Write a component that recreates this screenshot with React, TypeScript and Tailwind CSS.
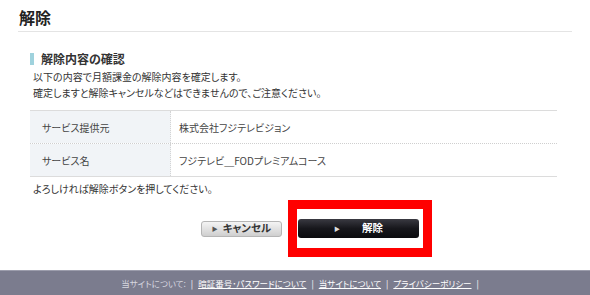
import React from "react";

const jp = "font-['Noto_Sans_CJK_JP','Noto_Sans',sans-serif] [font-feature-settings:'palt']";

export default function App() {
  return (
    <div className={`w-[590px] h-[295px] bg-white flex flex-col text-[#333] ${jp}`}>
      <div className="flex-1 px-[18px]">
        <div className="pt-[6px] pl-[1px] h-[32px] text-[16px] font-bold leading-[22px] text-[#222] border-b border-[#e4e4e4]">
          解除
        </div>
        <div className="pl-[12px] pr-[15px]">
          <div className="mt-[21px] flex items-center h-[12px]">
            <div className="w-[4px] h-[12px] bg-[#9fd2dd]" />
            <div className="ml-[7px] text-[12px] font-bold leading-[12px] text-[#333]">解除内容の確認</div>
          </div>
          <div className="mt-[4px] pl-[3px] text-[10px] leading-[16px] text-[#333]">
            <div>以下の内容で月額課金の解除内容を確定します。</div>
            <div>確定しますと解除キャンセルなどはできませんので、ご注意ください。</div>
          </div>
          <div className="mt-[9px] border-t border-b border-[#dcdcdc] text-[10px] text-[#444]">
            <div className="flex h-[33px] border-b border-dotted border-[#cfcfcf]">
              <div className="w-[141px] bg-[#f1f4f7] border-r border-dotted border-[#d4d4d4] pl-[12px] flex items-center">サービス提供元</div>
              <div className="flex-1 pl-[8px] flex items-center">株式会社フジテレビジョン</div>
            </div>
            <div className="flex h-[32px]">
              <div className="w-[141px] bg-[#f1f4f7] border-r border-dotted border-[#d4d4d4] pl-[12px] flex items-center">サービス名</div>
              <div className="flex-1 pl-[8px] flex items-center">フジテレビ＿FODプレミアムコース</div>
            </div>
          </div>
          <div className="mt-[4px] pl-[3px] text-[10px] leading-[16px] text-[#333]">よろしければ解除ボタンを押してください。</div>
          <div className="mt-[22px] flex items-center pl-[171px]">
            <button className="w-[81px] h-[16px] rounded-[3px] border border-[#b5b5b5] bg-gradient-to-b from-[#f4f4f4] to-[#cfcfcf] flex items-center justify-center text-[10.5px] font-bold text-[#333] leading-none">
              <span className="text-[6px] mr-[5px] text-[#555]">▶</span>キャンセル
            </button>
            <div className="relative ml-[16px]">
              <button className="w-[121px] h-[19px] rounded-[3px] bg-gradient-to-b from-[#3a3a42] via-[#17171c] to-[#0b0b0e] flex items-center justify-center text-[10.5px] font-bold text-white leading-none">
                <span className="text-[6px] mr-[22px] text-[#ddd]">▶</span>解除
              </button>
              <div className="absolute left-[-10px] top-[-19px] w-[144px] h-[57px] border-[9px] border-[#ff0000]" />
            </div>
          </div>
        </div>
      </div>
      <div className="h-[25px] bg-[#7b7c8e] border-t border-[#9c9dac] flex items-center justify-center text-[8.5px] text-white gap-[5px] pl-[10px]">
        <span className="text-[#d8d8e0]">当サイトについて:</span>
        <span>|</span>
        <span className="underline">暗証番号･パスワードについて</span>
        <span>|</span>
        <span className="underline">当サイトについて</span>
        <span>|</span>
        <span className="underline">プライバシーポリシー</span>
        <span>|</span>
      </div>
    </div>
  );
}
